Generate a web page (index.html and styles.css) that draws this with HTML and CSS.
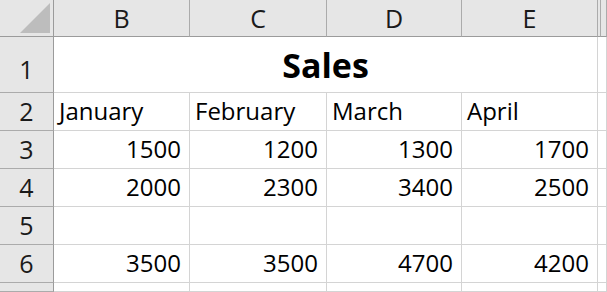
FILE: index.html
```html
<!DOCTYPE html>
<html lang="en">
  <head>
    <meta charset="UTF-8" />
    <title>Sales</title>
    <link rel="stylesheet" href="styles.css">
  </head>
  <body>
    <div class="sheet">
      <!-- column headings -->
      <div class="corner">
        <svg width="30" height="30" viewBox="0 0 30 30"><polygon points="30,0 30,30 0,30" fill="#bdbdbd" /></svg>
      </div>
      <div class="col-head">B</div>
      <div class="col-head">C</div>
      <div class="col-head">D</div>
      <div class="col-head">E</div>
      <div class="col-head narrow"></div>
      <div class="col-head"></div>

      <!-- row 1: merged title -->
      <div class="row-head tall">1</div>
      <div class="cell title">Sales</div>
      <div class="cell narrow"></div>
      <div class="cell"></div>

      <!-- row 2 -->
      <div class="row-head">2</div>
      <div class="cell text">January</div>
      <div class="cell text">February</div>
      <div class="cell text">March</div>
      <div class="cell text">April</div>
      <div class="cell narrow"></div>
      <div class="cell"></div>

      <!-- row 3 -->
      <div class="row-head">3</div>
      <div class="cell num">1500</div>
      <div class="cell num">1200</div>
      <div class="cell num">1300</div>
      <div class="cell num">1700</div>
      <div class="cell narrow"></div>
      <div class="cell"></div>

      <!-- row 4 -->
      <div class="row-head">4</div>
      <div class="cell num">2000</div>
      <div class="cell num">2300</div>
      <div class="cell num">3400</div>
      <div class="cell num">2500</div>
      <div class="cell narrow"></div>
      <div class="cell"></div>

      <!-- row 5 -->
      <div class="row-head">5</div>
      <div class="cell"></div>
      <div class="cell"></div>
      <div class="cell"></div>
      <div class="cell"></div>
      <div class="cell narrow"></div>
      <div class="cell"></div>

      <!-- row 6 -->
      <div class="row-head">6</div>
      <div class="cell num">3500</div>
      <div class="cell num">3500</div>
      <div class="cell num">4700</div>
      <div class="cell num">4200</div>
      <div class="cell narrow"></div>
      <div class="cell"></div>

      <!-- row 7, scrolled mostly out of view -->
      <div class="row-head"></div>
      <div class="cell"></div>
      <div class="cell"></div>
      <div class="cell"></div>
      <div class="cell"></div>
      <div class="cell narrow"></div>
      <div class="cell"></div>
    </div>
  </body>
</html>
```

FILE: styles.css
```css
:root {
  --head-bg: #e6e6e6;
  --head-line: #ababab;
  --head-edge: #9b9b9b;
  --grid-line: #d4d4d4;
  --text-color: #000000;
}
* {
  box-sizing: border-box;
}
body {
  margin: 0;
  background: #ffffff;
  font-family: "Open Sans", "Lato", sans-serif;
  color: var(--text-color);
  overflow: hidden;
}
.sheet {
  display: grid;
  grid-template-columns: 54px 136px 137px 135px 136px 3px 1fr;
  grid-template-rows: 37px 56px 38px 38px 38px 38px 38px;
  width: 607px;
  height: 292px;
  overflow: hidden;
}
.corner {
  display: flex;
  justify-content: flex-end;
  align-items: flex-end;
  padding: 0 3px 3px 0;
  background: var(--head-bg);
  border-right: 1px solid var(--head-edge);
  border-bottom: 1px solid var(--head-edge);
}
.col-head {
  display: flex;
  justify-content: center;
  align-items: center;
  background: var(--head-bg);
  border-right: 1px solid var(--head-line);
  border-bottom: 1px solid var(--head-edge);
  font-size: 25px;
  line-height: 1;
  color: #1a1a1a;
}
.row-head {
  display: flex;
  justify-content: center;
  align-items: flex-end;
  padding-bottom: 6px;
  background: var(--head-bg);
  border-right: 1px solid var(--head-edge);
  border-bottom: 1px solid var(--head-line);
  font-size: 25px;
  line-height: 1;
  color: #1a1a1a;
}
.row-head.tall {
  padding-bottom: 10px;
}
.cell {
  display: flex;
  align-items: flex-end;
  padding-bottom: 7px;
  border-right: 1px solid var(--grid-line);
  border-bottom: 1px solid var(--grid-line);
  font-size: 24px;
  line-height: 1;
  white-space: nowrap;
}
.cell.narrow {
  border-right: none;
}
.cell.text {
  padding-left: 5px;
}
.cell.num {
  justify-content: flex-end;
  padding-right: 8px;
}
.cell.title {
  grid-column: span 4;
  justify-content: center;
  align-items: center;
  padding-bottom: 0;
  font-size: 34px;
  font-weight: 700;
}
```
